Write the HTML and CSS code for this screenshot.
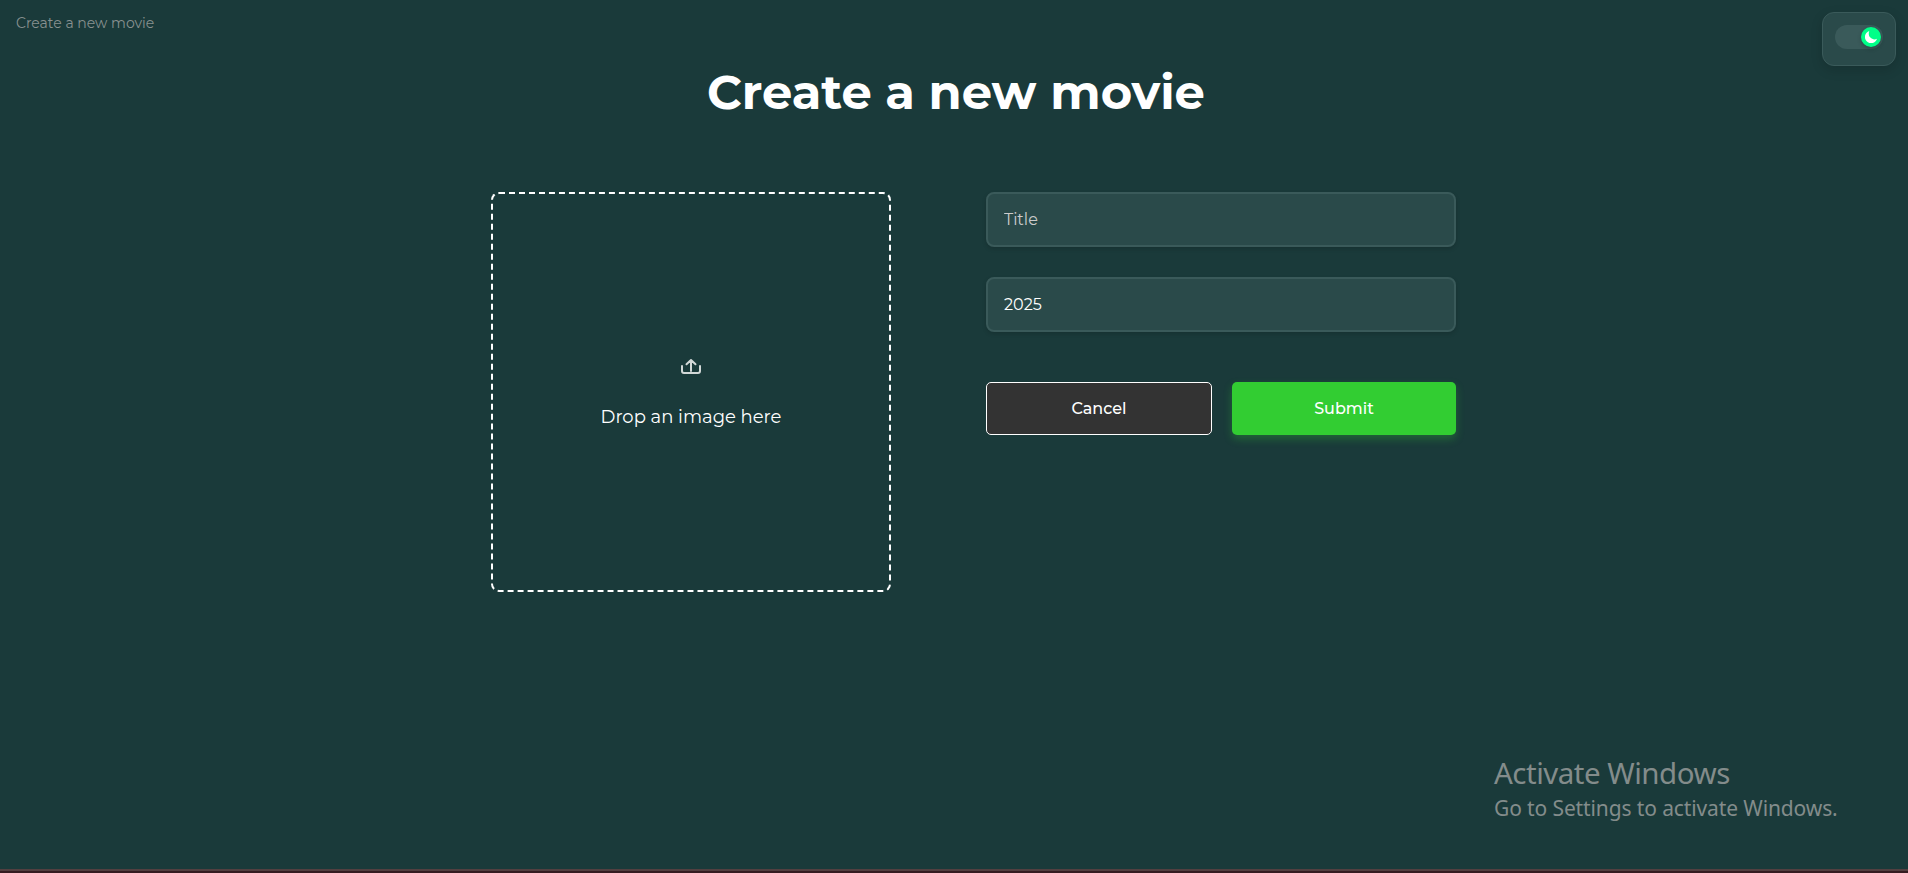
FILE: index.html
```html
<!DOCTYPE html>
<html lang="en">
<head>
<meta charset="utf-8">
<title>Create a new movie</title>
<link rel="stylesheet" href="styles.css">
</head>
<body>
<div class="page">
  <header class="topbar">
    <span class="crumb">Create a new movie</span>
    <button class="theme" type="button" aria-label="Toggle theme">
      <span class="track"><span class="knob">
        <svg width="12" height="12" viewBox="0 0 12 12"><path fill="#fff" d="M4.300 0A6.200 6.200 0 1 0 12 7.800C9.500 9 7 8.200 5.400 6.600C3.700 4.900 3.300 2.500 4.300 0Z"/></svg>
      </span></span>
    </button>
  </header>
  <h1 class="heading"><span>Create a new movie</span></h1>
  <main class="content">
    <div class="drop">
      <svg class="upload" width="24" height="24" viewBox="0 0 24 24" fill="none" stroke="#d2d8d7" stroke-width="2" stroke-linecap="round" stroke-linejoin="round">
        <path d="M3 12v5q0 2 2 2h14q2 0 2-2v-5M12 17V6.200M7.500 10.300 12 6l4.500 4.300"/>
      </svg>
      <p class="drop-text">Drop an image here</p>
    </div>
    <form class="form">
      <input class="field title" type="text" placeholder="Title">
      <input class="field year" type="text" value="2025">
      <div class="actions">
        <button class="btn cancel" type="button"><span>Cancel</span></button>
        <button class="btn submit" type="button"><span>Submit</span></button>
      </div>
    </form>
  </main>
  <aside class="notice">
    <p class="notice-title">Activate Windows</p>
    <p class="notice-text">Go to Settings to activate Windows.</p>
  </aside>
  <div class="edge"></div>
</div>
</body>
</html>
```
FILE: styles.css
```css
* { box-sizing: border-box; }
body { margin: 0; background: #1a3a3a; color: #fff; font-family: Montserrat, Inter, sans-serif; }
p { margin: 0; }
svg { display: block; }
.page { width: 1908px; height: 873px; overflow: hidden; display: flex; flex-direction: column; }
.topbar { height: 65px; flex: none; padding: 12px 12px 0 16px; display: flex; justify-content: space-between; align-items: flex-start; }
.crumb { font-size: 14px; line-height: 22px; color: #889190; font-weight: 400; }
.theme { display: flex; align-items: flex-start; width: 74px; height: 54px; padding: 12px; border: 1px solid #3a5a5a; border-radius: 12px; background: #2a4a4a; box-shadow: 0 4px 12px rgba(0,0,0,.15); }
.track { display: flex; justify-content: flex-end; align-items: center; width: 48px; height: 24px; padding-right: 2px; border-radius: 12px; background: #3a5a5a; }
.knob { display: flex; align-items: center; justify-content: center; width: 20px; height: 20px; border-radius: 50%; background: #00ff88; box-shadow: 0 2px 4px rgba(0,0,0,.2); }
.heading { margin: 0; height: 127px; padding-left: 4px; display: flex; justify-content: center; font-size: 48px; line-height: 54px; font-weight: 700; }
.content { display: flex; gap: 95px; padding-left: 491px; height: 400px; flex: none; }
.drop { width: 400px; height: 400px; border: 2px dashed #fff; border-radius: 8px; display: flex; flex-direction: column; align-items: center; padding-top: 160px; }
.drop-text { margin-top: 26px; font-size: 18px; line-height: 26px; color: #fff; }
.form { width: 470px; }
.field { display: block; width: 470px; height: 55px; margin: 0 0 30px; padding: 0 16px; border: 2px solid #3a5a5a; border-radius: 8px; background: #2a4a4a; color: #fff; font-family: inherit; font-size: 16px; font-weight: 400; outline: 0; box-shadow: 0 2px 4px rgba(0,0,0,.15); }
.field::placeholder { color: #ccc; opacity: 1; }
.actions { display: flex; gap: 20px; padding-top: 20px; }
.btn { height: 53px; border-radius: 5px; color: #fff; font-family: inherit; font-size: 16px; font-weight: 500; padding: 0; }
.cancel { width: 226px; border: 1px solid #fff; background: #333; }
.submit { width: 224px; border: 0; background: #32cd32; box-shadow: 0 4px 8px rgba(50,205,50,.3); }
.notice { margin: 163px 0 0 1494px; font-family: "Segoe UI", "Noto Sans", sans-serif; color: #838c8b; white-space: nowrap; }
.notice-title { font-size: 29.5px; line-height: 36px; letter-spacing: -.5px; }
.notice-text { padding-top: 1px; font-size: 21px; line-height: 32px; letter-spacing: -.12px; }
.edge { height: 4px; margin-top: auto; flex: none; background: #351c21; border-top: 2px solid #523f40; }
```
